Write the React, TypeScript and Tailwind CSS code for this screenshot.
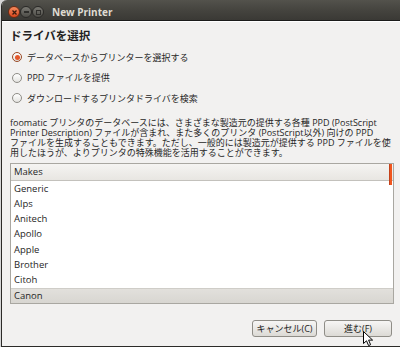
import React from "react";

function Radio({ checked }: { checked?: boolean }) {
  return (
    <span
      className={
        "ml-[2px] w-[10px] h-[10px] rounded-full border flex items-center justify-center shrink-0 bg-gradient-to-b from-white to-[#e4e3e0] " +
        (checked ? "border-[#9b4a25]" : "border-[#8f8d87]")
      }
    >
      {checked && <span className="w-[5px] h-[5px] rounded-full bg-[#e4582c]" />}
    </span>
  );
}

const makes = ["Generic", "Alps", "Anitech", "Apollo", "Apple", "Brother", "Citoh", "Canon"];

export default function App() {
  return (
    <div className="relative w-[400px] h-[347px] overflow-hidden bg-[#d6d6d6] pl-px text-[#262626] [font-family:'Open_Sans','Noto_Sans_CJK_JP',sans-serif]">
      <div className="h-full flex flex-col border-l border-b border-[#2c2b28] bg-[#f2f1f0] rounded-tl-[6px] overflow-hidden">
        {/* title bar */}
        <div className="h-[21px] shrink-0 border-b border-[#1b1b1a] bg-gradient-to-b from-[#53524c] via-[#45443f] to-[#3a3935] flex items-center pl-[6px] pt-[4px]">
          <span className="w-[12px] h-[12px] rounded-full bg-gradient-to-b from-[#f58a5c] to-[#d9461b] border border-[#6e2a12] flex items-center justify-center">
            <svg width="7" height="7" viewBox="0 0 7 7">
              <path d="M1.5 1.5 L5.5 5.5 M5.5 1.5 L1.5 5.5" stroke="#3a1a0e" strokeWidth="1.3" />
            </svg>
          </span>
          <span className="w-[12px] h-[12px] rounded-full bg-gradient-to-b from-[#7a7973] to-[#4d4c47] border border-[#2a2927] flex items-center justify-center">
            <span className="w-[5px] h-[1.5px] bg-[#2f2e2b]" />
          </span>
          <span className="w-[12px] h-[12px] rounded-full bg-gradient-to-b from-[#7a7973] to-[#4d4c47] border border-[#2a2927] flex items-center justify-center">
            <span className="w-[5px] h-[5px] border border-[#2f2e2b]" />
          </span>
          <span className="ml-[8px] text-[10px] font-bold text-[#dfdbd2] leading-none">New Printer</span>
        </div>
        <div className="h-px bg-white shrink-0" />

        {/* content */}
        <div className="flex-1 flex flex-col pl-[8px] pr-[6px] pt-[6px]">
          <div className="text-[11.5px] leading-[16px] font-bold text-[#222222]">ドライバを選択</div>

          <div className="mt-[3px] flex flex-col text-[9px]">
            <div className="h-[20.5px] flex items-center gap-[5px]">
              <Radio checked />
              <span>データベースからプリンターを選択する</span>
            </div>
            <div className="h-[20.5px] flex items-center gap-[5px]">
              <Radio />
              <span>PPD ファイルを提供</span>
            </div>
            <div className="h-[20.5px] flex items-center gap-[5px]">
              <Radio />
              <span>ダウンロードするプリンタドライバを検索</span>
            </div>
          </div>

          <p className="mt-[9.5px] text-[9px] leading-[10px] whitespace-nowrap">
            foomatic プリンタのデータベースには、さまざまな製造元の提供する各種 PPD (PostScript
            <br />
            Printer Description) ファイルが含まれ、また多くのプリンタ (PostScript以外) 向けの PPD
            <br />
            ファイルを生成することもできます。ただし、一般的には製造元が提供する PPD ファイルを使
            <br />
            用したほうが、よりプリンタの特殊機能を活用することができます。
          </p>

          <div className="relative mt-[5px] border border-[#a9a7a1] bg-white flex flex-col">
            <div className="h-[17px] border-b border-[#c3c1bc] bg-gradient-to-b from-[#f5f4f2] to-[#e8e6e2] flex items-center pl-[3px] text-[9.5px]">
              Makes
            </div>
            {makes.map((m, i) => (
              <div
                key={m}
                className={
                  "h-[15.3px] flex items-center pl-[3px] text-[9.5px] " +
                  (i === makes.length - 1 ? "bg-gradient-to-b from-[#e2e0dc] to-[#d8d6d1] border-t border-[#cfcdc8]" : "")
                }
              >
                {m}
              </div>
            ))}
            <div className="absolute right-[1px] top-0 w-[3px] h-[21px] bg-[#f0561f] border-l border-[#c4421a]" />
          </div>

          <div className="mt-[16px] mr-[2px] flex justify-end gap-[7px] text-[9px]">
            <button className="w-[65px] h-[17px] rounded-[3px] border border-[#8f8d87] bg-gradient-to-b from-[#f7f6f5] to-[#dcdad5] flex items-center justify-center text-[#222222]">
              キャンセル(C)
            </button>
            <button className="w-[68px] h-[17px] rounded-[3px] border border-[#8f8d87] bg-gradient-to-b from-[#f7f6f5] to-[#dcdad5] flex items-center justify-center text-[#222222]">
              進む(F)
            </button>
          </div>
        </div>
      </div>

      {/* mouse cursor */}
      <svg className="absolute left-[363px] top-[331px]" width="11" height="16" viewBox="0 0 11 16">
        <path d="M0.5 0.5 L0.5 12.5 L3.5 9.8 L5.6 14.6 L7.6 13.7 L5.6 9.1 L9.6 9.1 Z" fill="white" stroke="black" strokeWidth="1" strokeLinejoin="round" />
      </svg>
    </div>
  );
}
